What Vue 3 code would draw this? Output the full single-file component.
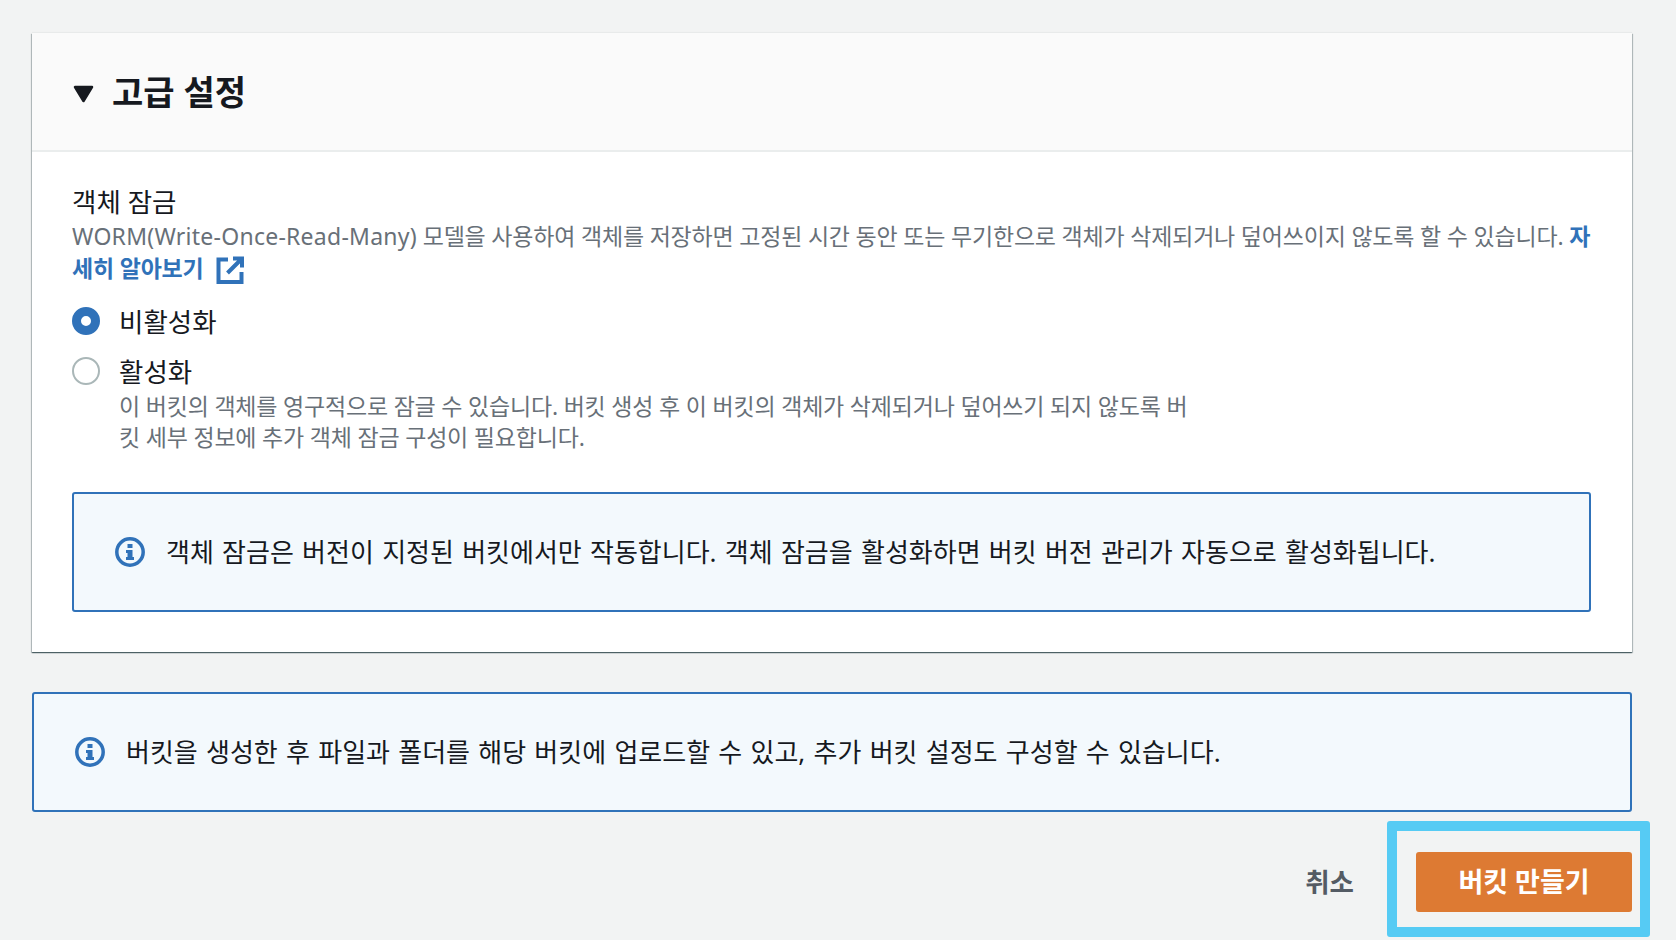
<script setup>
</script>

<template>
  <main class="page">
    <section class="card">
      <header class="card-head">
        <svg class="caret" width="21" height="18" viewBox="0 0 21 18"><path d="M2 2h17L10.500 16z" fill="#16191f" stroke="#16191f" stroke-width="2.500" stroke-linejoin="round" /></svg>
        <h2>고급 설정</h2>
      </header>
      <div class="card-body">
        <div class="label">객체 잠금</div>
        <p class="desc"><span class="latin">WORM(Write-Once-Read-Many)</span> 모델을 사용하여 객체를 저장하면 고정된 시간 동안 또는 무기한으로 객체가 삭제되거나 덮어쓰이지 않도록 할 수 있습니다. <a class="link">자세히 알아보기<svg class="ext" width="28" height="28" viewBox="0 0 28 28" fill="none" stroke="#3072b9" stroke-width="4"><path d="M12 3.500H2.500v22.500h23V16" /><path d="M17 2.500h9v9M25.500 3 11.500 17" /></svg></a></p>
        <div class="radio">
          <span class="dot on"></span>
          <div class="radio-text"><div class="radio-label">비활성화</div></div>
        </div>
        <div class="radio second">
          <span class="dot"></span>
          <div class="radio-text">
            <div class="radio-label">활성화</div>
            <p class="radio-desc">이 버킷의 객체를 영구적으로 잠글 수 있습니다. 버킷 생성 후 이 버킷의 객체가 삭제되거나 덮어쓰기 되지 않도록 버킷 세부 정보에 추가 객체 잠금 구성이 필요합니다.</p>
          </div>
        </div>
        <div class="alert inner">
          <svg class="info" width="32" height="32" viewBox="0 0 32 32"><circle cx="16" cy="16" r="13.200" fill="none" stroke="#3072b9" stroke-width="3.500" /><path d="M13.500 8h5v4h-5zM12 14h6.500v7H20v3h-8v-3h1.500v-4H12z" fill="#3072b9" /></svg>
          <span>객체 잠금은 버전이 지정된 버킷에서만 작동합니다. 객체 잠금을 활성화하면 버킷 버전 관리가 자동으로 활성화됩니다.</span>
        </div>
      </div>
    </section>
    <div class="alert outer">
      <svg class="info" width="32" height="32" viewBox="0 0 32 32"><circle cx="16" cy="16" r="13.200" fill="none" stroke="#3072b9" stroke-width="3.500" /><path d="M13.500 8h5v4h-5zM12 14h6.500v7H20v3h-8v-3h1.500v-4H12z" fill="#3072b9" /></svg>
      <span>버킷을 생성한 후 파일과 폴더를 해당 버킷에 업로드할 수 있고, 추가 버킷 설정도 구성할 수 있습니다.</span>
    </div>
    <footer class="actions">
      <button class="cancel">취소</button>
      <button class="create">버킷 만들기<span class="highlight"></span></button>
    </footer>
  </main>
</template>

<style>
html, body { margin: 0; background: #f2f3f3; overflow: hidden; }
</style>

<style scoped>
.page {
  box-sizing: border-box;
  width: 1676px;
  height: 940px;
  padding: 33px 44px 0 32px;
  background: #f2f3f3;
  font-family: "Noto Sans", "Noto Sans CJK KR", sans-serif;
  color: #16191f;
}
.card {
  background: #fff;
  box-shadow: 0 1px 1px rgba(0, 28, 36, .5), 1px 1px 1px rgba(0, 28, 36, .2), -1px 1px 1px rgba(0, 28, 36, .2), 0 -1px 1px rgba(0, 28, 36, .04);
  height: 619px;
}
.card-head {
  box-sizing: border-box;
  height: 119px;
  padding-left: 41px;
  display: flex;
  align-items: center;
  gap: 18px;
  background: #fafafa;
  border-bottom: 2px solid #eaeded;
}
.caret { margin-top: 5px; }
h2 { margin: 0; font-size: 34px; font-weight: 700; line-height: 40px; }
.card-body { padding: 33px 41px 0 40px; }
.label { font-size: 26.500px; line-height: 35px; }
.desc { margin: 0; font-size: 23px; line-height: 32px; color: #687078; letter-spacing: -.2px; }
.latin { letter-spacing: .25px; }
.link { color: #3072b9; font-weight: 700; }
.ext { vertical-align: -7px; margin-left: 12px; }
.radio { display: flex; gap: 19px; margin-top: 19px; }
.radio.second { margin-top: 12px; }
.dot {
  box-sizing: border-box;
  flex: none;
  width: 28px;
  height: 28px;
  margin-top: 4px;
  border-radius: 50%;
  border: 2px solid #aab7b8;
  background: #fff;
}
.dot.on { border: 9px solid #3072b9; }
.radio-label { font-size: 26.500px; line-height: 38px; }
.radio-desc { margin: 0; width: 1080px; font-size: 23px; line-height: 31px; color: #687078; letter-spacing: -.2px; }
.alert {
  box-sizing: border-box;
  display: flex;
  align-items: center;
  gap: 20px;
  background: #f3f9fd;
  border: 2px solid #3072b9;
  border-radius: 3px;
  font-size: 26px;
  word-spacing: 1.500px;
}
.alert span { padding-bottom: 3px; }
.alert.inner { height: 120px; margin-top: 39px; padding-left: 40px; }
.alert.outer { height: 120px; margin-top: 40px; padding-left: 40px; }
.actions {
  display: flex;
  justify-content: flex-end;
  align-items: center;
  margin-top: 40px;
}
button { border: 0; background: none; font-family: inherit; cursor: pointer; padding: 0; }
.cancel { padding: 0 62px 4px 0; font-size: 26.500px; font-weight: 700; color: #545b64; }
.create {
  position: relative;
  width: 216px;
  height: 60px;
  padding-bottom: 4px;
  background: #dd7a33;
  border-radius: 3px;
  color: #fff;
  font-size: 27px;
  font-weight: 700;
}
.highlight {
  position: absolute;
  left: -29px;
  top: -31px;
  width: 263px;
  height: 116px;
  box-sizing: border-box;
  border: 10px solid #56cbf4;
  border-radius: 3px;
}
</style>
